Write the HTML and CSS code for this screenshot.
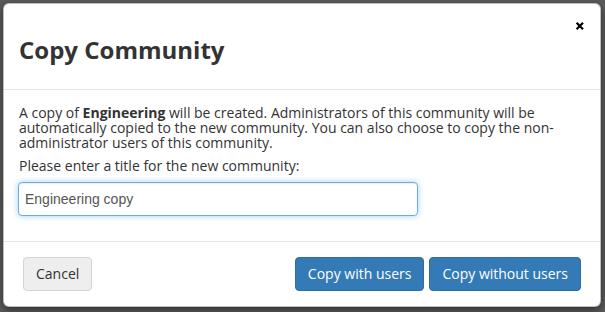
FILE: index.html
```html
<!DOCTYPE html>
<html>
<head>
<meta charset="utf-8">
<link rel="stylesheet" href="styles.css">
</head>
<body>
<div class="modal">
  <div class="modal-header">
    <div class="close-row">
      <button class="close" aria-label="Close">
        <svg width="10" height="14" viewBox="0 0 10 14"><path d="M1.6 3.8 L8 10.2 M8 3.8 L1.6 10.2" stroke="#000" stroke-width="2.2" stroke-linecap="butt"/></svg>
      </button>
    </div>
    <h4 class="modal-title">Copy Community</h4>
  </div>
  <div class="modal-body">
    <p class="intro">A copy of <b>Engineering</b> will be created. Administrators of this community will be automatically copied to the new community. You can also choose to copy the non-administrator users of this community.</p>
    <div class="label">Please enter a title for the new community:</div>
    <input class="title-input" type="text" value="Engineering copy">
  </div>
  <div class="modal-footer">
    <button class="btn btn-default">Cancel</button>
    <div class="btn-group">
      <button class="btn btn-primary">Copy with users</button>
      <button class="btn btn-primary">Copy without users</button>
    </div>
  </div>
</div>
</body>
</html>
```
FILE: styles.css
```css
html, body {
  margin: 0;
  padding: 0;
}
body {
  background: #5b5b5b;
  font-family: "Open Sans", sans-serif;
  font-size: 14px;
  color: #333;
  height: 312px;
  overflow: hidden;
}
.modal {
  box-sizing: border-box;
  width: 598px;
  margin: 3px 0 0 3px;
  background: #fff;
  border: 1px solid rgba(0,0,0,0.25);
  border-radius: 6px;
  box-shadow: 0 3px 9px rgba(0,0,0,0.5);
}
.modal-header {
  padding: 15px 15px 22px;
  border-bottom: 1px solid #e5e5e5;
}
.close-row {
  display: flex;
  justify-content: flex-end;
  height: 14px;
}
.close {
  background: none;
  border: 0;
  padding: 0;
  margin: 0;
  width: 10px;
  height: 14px;
  display: block;
  cursor: pointer;
}
.close svg {
  display: block;
}
.modal-title {
  margin: 0;
  font-size: 24px;
  font-weight: 700;
  line-height: 34px;
  color: #333;
}
.modal-body {
  padding: 15px;
}
.intro {
  margin: 0 0 8px;
  line-height: 15px;
}
.intro b {
  font-weight: 700;
}
.label {
  line-height: 15px;
  margin-bottom: 9px;
}
.title-input {
  display: block;
  box-sizing: border-box;
  width: 400px;
  height: 34px;
  margin: 0 0 10px -1px;
  padding: 6px;
  border: 1px solid #66afe9;
  border-radius: 4px;
  font-family: "Liberation Sans", Arial, sans-serif;
  font-size: 14px;
  color: #555;
  outline: none;
  box-shadow: inset 0 1px 1px rgba(0,0,0,0.075), 0 0 6px rgba(102,175,233,0.6);
}
.modal-footer {
  display: flex;
  justify-content: space-between;
  align-items: center;
  padding: 15px 19px 15px 19px;
  border-top: 1px solid #e5e5e5;
}
.btn-group {
  display: flex;
  gap: 5px;
}
.btn {
  box-sizing: border-box;
  height: 34px;
  padding: 0 12px;
  border: 1px solid transparent;
  border-radius: 4px;
  font-family: "Open Sans", sans-serif;
  font-size: 14px;
  line-height: 20px;
  cursor: pointer;
}
.btn-default {
  background: #eeeeee;
  border-color: #d4d4d4;
  color: #333;
}
.btn-primary {
  background: #337ab7;
  border-color: #2e6da4;
  color: #fff;
}
```
